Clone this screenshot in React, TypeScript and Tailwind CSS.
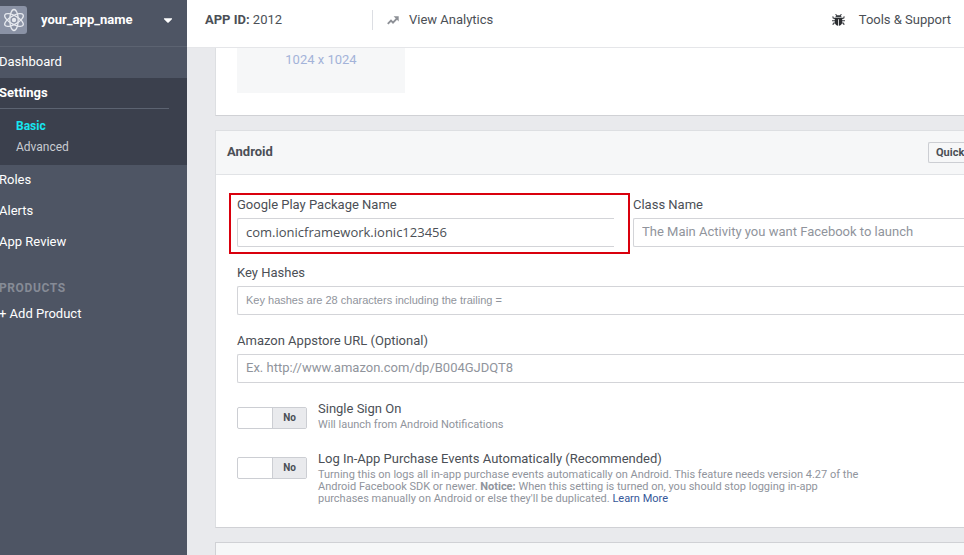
import { ReactNode } from "react";
import { FaCaretDown } from "react-icons/fa";

function AtomIcon() {
  return (
    <svg viewBox="0 0 24 24" className="size-6" fill="none" stroke="#e6e9ef" strokeWidth="1.3" aria-hidden="true">
      <ellipse cx="12" cy="12" rx="4.2" ry="10.5" />
      <ellipse cx="12" cy="12" rx="4.2" ry="10.5" transform="rotate(60 12 12)" />
      <ellipse cx="12" cy="12" rx="4.2" ry="10.5" transform="rotate(120 12 12)" />
      <circle cx="12" cy="12" r="2.2" fill="#e6e9ef" stroke="none" />
    </svg>
  );
}

function TrendIcon() {
  return (
    <svg viewBox="0 0 12 9" className="h-[9px] w-3" aria-hidden="true">
      <path d="M0.8 7.8 4 4.6 6 6.6 9.8 2.6" fill="none" stroke="#8d9096" strokeWidth="1.9" />
      <path d="M6.6 0.3H11.7V5.4Z" fill="#8d9096" />
    </svg>
  );
}

function BugIcon() {
  return (
    <svg viewBox="0 0 13 12" className="h-3 w-[13px]" aria-hidden="true">
      <path
        d="M3.6 0.2 5 2M9.4 0.2 8 2M3.6 4.6 1.2 4 0.8 2.4M9.4 4.6 11.8 4 12.2 2.4M3.5 6.8H0M9.5 6.8H13M3.8 8.8 1.4 9.2 1 11M9.2 8.8 11.6 9.2 12 11"
        fill="none"
        stroke="#3a3d42"
        strokeWidth="1.1"
      />
      <path d="M3.4 3.2C3.6 0.6 9.4 0.6 9.6 3.2Z" fill="#3a3d42" />
      <path d="M2.8 3.8H10.2V8C10.2 10.4 8.4 11.8 6.9 11.8V5.2H6.1V11.8C4.6 11.8 2.8 10.4 2.8 8Z" fill="#2b2d31" />
    </svg>
  );
}

function NavLink({ children, bold = false }: { children: ReactNode; bold?: boolean }) {
  return (
    <a href="#" className={bold ? "block h-[30px] leading-[30px] font-bold" : "block h-[31px] leading-[30px]"}>
      {children}
    </a>
  );
}

function Sidebar() {
  return (
    <aside className="w-[187px] shrink-0 overflow-hidden bg-[#4e5564] text-white">
      <button type="button" className="flex h-[47px] w-full items-center border-b border-[#5c6371] pb-1.5 text-left font-bold">
        <span className="flex h-7 w-[27px] shrink-0 items-center justify-center rounded-r-[3px] bg-[#8a92a5]">
          <AtomIcon />
        </span>
        <span className="ml-3.5 flex-1">your_app_name</span>
        <FaCaretDown className="mr-3 size-3.5" />
      </button>
      <nav>
        <div className="-ml-px">
          <NavLink>Dashboard</NavLink>
        </div>
        <div className="h-[87px] bg-[#3b404d]">
          <div className="-ml-px mr-[18px] border-b border-[#5c6371]">
            <NavLink bold>Settings</NavLink>
          </div>
          <div className="flex flex-col pt-[7px] pl-4 text-xs leading-[21px]">
            <a href="#" className="font-bold text-[#16e6f0]">Basic</a>
            <a href="#" className="text-[#c9ccd2]">Advanced</a>
          </div>
        </div>
        <div className="-ml-px">
          <NavLink>Roles</NavLink>
          <NavLink>Alerts</NavLink>
          <NavLink>App Review</NavLink>
          <h2 className="mt-5 mb-px h-5 text-xs leading-5 font-bold tracking-wider text-[#868b96]">PRODUCTS</h2>
          <NavLink>+ Add Product</NavLink>
        </div>
      </nav>
    </aside>
  );
}

function TopBar() {
  return (
    <header className="flex h-12 shrink-0 items-center border-b border-[#e5e6e9] bg-white pr-[13px] pb-[7px] pl-[18px]">
      <p className="w-[167px]">
        <strong>APP ID:</strong> 2012
      </p>
      <a href="#" className="flex h-5 items-center gap-2.5 border-l border-[#dcdee3] pl-3.5">
        <TrendIcon />
        View Analytics
      </a>
      <a href="#" className="ml-auto flex items-center gap-3.5">
        <BugIcon />
        Tools &amp; Support
      </a>
    </header>
  );
}

type FieldProps = {
  id: string;
  label: string;
  value?: string;
  placeholder?: string;
  inputClass: string;
};

function Field({ id, label, value, placeholder, inputClass }: FieldProps) {
  return (
    <div>
      <label htmlFor={id} className="block leading-5">{label}</label>
      <input
        id={id}
        type="text"
        defaultValue={value}
        placeholder={placeholder}
        className={`mt-[3px] block h-[29px] w-full rounded-l-[2px] border border-r-0 border-[#d3d4d8] bg-white px-2 pb-0.5 placeholder:text-[#90949c] ${inputClass}`}
      />
    </div>
  );
}

function Toggle({ id, title, children }: { id: string; title: string; children: ReactNode }) {
  return (
    <div className="flex items-start gap-[11px]">
      <label className="mt-2 flex h-[22px] w-[70px] shrink-0 rounded-[2px] border border-[#ccced3] bg-white text-[10px] leading-5 font-bold text-[#4b4f56]">
        <input id={id} type="checkbox" aria-label={title} className="sr-only" />
        <span className="flex-1" />
        <span className="w-[34px] border-l border-[#ccced3] bg-[#e9eaed] text-center">No</span>
      </label>
      <div>
        <label htmlFor={id} className="block leading-5">{title}</label>
        <p className="max-w-[548px] text-[11px] leading-3 text-[#90949c]">{children}</p>
      </div>
    </div>
  );
}

const roboto = "font-['Roboto',sans-serif]";
const arial = "font-['Liberation_Sans',Arial,sans-serif]";

export default function App() {
  return (
    <div className={`flex h-screen overflow-hidden text-[13px] text-[#4b4f56] ${roboto}`}>
      <Sidebar />
      <div className="flex min-w-0 flex-1 flex-col bg-[#e9eaed]">
        <TopBar />
        <main className="min-h-0 flex-1 overflow-hidden pl-7">
          <section className="border-b border-l border-[#d0d1d5] border-l-[#dddfe2] bg-white pb-[22px] pl-[21px]">
            <div className="h-[45px] w-[168px] bg-[#f6f7f8] text-center leading-6 text-[#a3b3d9]">1024 x 1024</div>
          </section>

          <section className="mt-3.5 border border-r-0 border-[#dddfe2] border-b-[#d0d1d5] bg-white">
            <header className="flex h-11 items-center justify-between border-b border-[#e1e3e6] bg-[#f6f7f8] pl-[11px]">
              <h2 className="pb-0.5 font-bold">Android</h2>
              <button
                type="button"
                className="h-[21px] w-9 rounded-l-[2px] border border-r-0 border-[#ccced3] pl-[7px] text-left text-[11px] leading-[19px] font-bold"
              >
                Quick
              </button>
            </header>
            <form className="pt-5 pb-[22px] pl-[21px]">
              <div className="flex gap-[19px]">
                <div className="relative w-[377px] shrink-0">
                  <Field
                    id="package-name"
                    label="Google Play Package Name"
                    value="com.ionicframework.ionic123456"
                    inputClass="font-['Open_Sans',sans-serif]"
                  />
                  <div className="pointer-events-none absolute -top-0.5 -right-4 -bottom-[7px] -left-2 border-2 border-[#d9000d]" />
                </div>
                <div className="flex-1">
                  <Field
                    id="class-name"
                    label="Class Name"
                    placeholder="The Main Activity you want Facebook to launch"
                    inputClass=""
                  />
                </div>
              </div>
              <div className="mt-4 flex flex-col gap-4">
                <Field
                  id="key-hashes"
                  label="Key Hashes"
                  placeholder="Key hashes are 28 characters including the trailing ="
                  inputClass={`text-[11px] ${arial}`}
                />
                <Field
                  id="amazon-url"
                  label="Amazon Appstore URL (Optional)"
                  placeholder="Ex. http://www.amazon.com/dp/B004GJDQT8"
                  inputClass=""
                />
              </div>
              <div className="mt-4 flex flex-col gap-[18px]">
                <Toggle id="sso" title="Single Sign On">
                  Will launch from Android Notifications
                </Toggle>
                <Toggle id="iap" title="Log In-App Purchase Events Automatically (Recommended)">
                  Turning this on logs all in-app purchase events automatically on Android. This feature needs version
                  4.27 of the Android Facebook SDK or newer. <strong className="inline-block">Notice:</strong> When
                  this setting is turned on, you should stop logging in-app purchases manually on Android or else
                  they'll be duplicated.{" "}
                  <a href="#" className="inline-block text-[#365899]">Learn More</a>
                </Toggle>
              </div>
            </form>
          </section>

          <section className="mt-3.5 h-12 border border-r-0 border-[#d0d1d5] bg-[#f6f7f8]" />
        </main>
      </div>
    </div>
  );
}
